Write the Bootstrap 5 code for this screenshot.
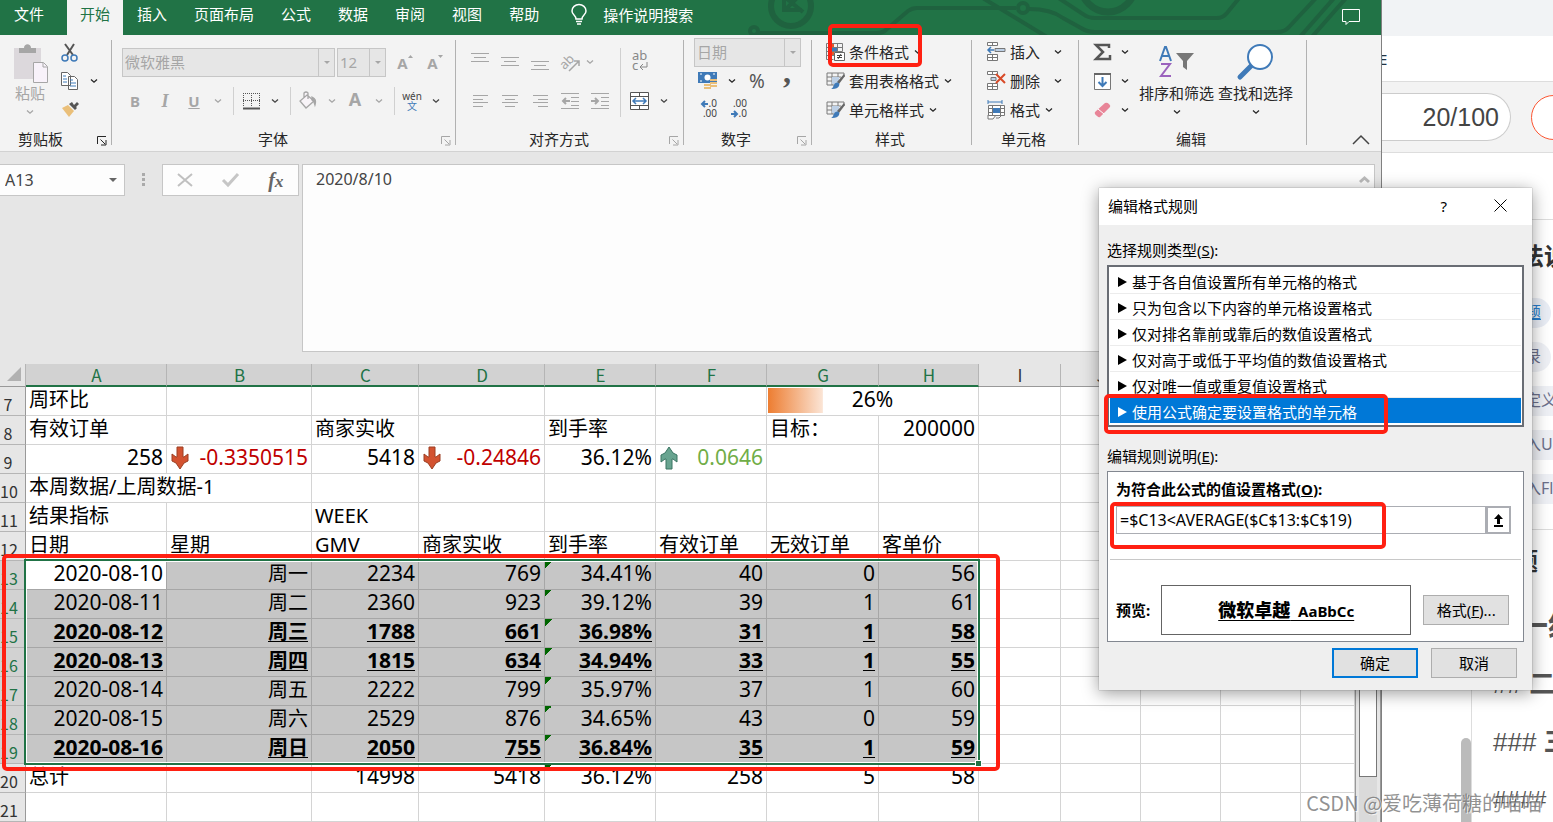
<!DOCTYPE html>
<html lang="zh-CN">
<head>
<meta charset="utf-8">
<meta name="viewport" content="width=device-width, initial-scale=1">
<title>编辑格式规则</title>
<link href="https://cdn.jsdelivr.net/npm/bootstrap@5.3.0/dist/css/bootstrap.min.css" rel="stylesheet">
<style>
:root{--xl:#217346;--gray:#a6a6a6;--ink:#262626;--mark:#ff2012}
body{font:15px/20px "Noto Sans","Noto Sans CJK SC",sans-serif;color:var(--ink);background:#fff;overflow:hidden}
button{font:inherit;color:inherit;background:none;border:0;padding:0}
svg{display:block;flex:none;overflow:visible}
.desktop{min-height:100vh}
.xl-window{min-width:0;border-right:1px solid #808080;background:#e6e6e6}
/* tab strip */
.tabstrip{height:35px;background:var(--xl);overflow:hidden}
.tabstrip .circuit{right:0;top:0}
.tabstrip a{display:block;position:relative;height:35px;padding:0 13px;line-height:28px;color:#fff;text-decoration:none}
.tabstrip a.active{background:#f3f3f3;color:var(--xl)}
.tabstrip .file-tab{margin:0 10px 0 1px}
.tabs{gap:1px}
.tell-me{margin-left:19px;height:29px}
/* ribbon */
.ribbon{height:117px;background:#f3f3f3;border-bottom:1px solid #d2d2d2}
.rgroup{display:flex;flex-direction:column;position:relative;flex:none}
.rgroup::after{content:"";position:absolute;right:0;top:5px;bottom:6px;width:1px;background:#b1b1b1}
.rbody{height:93px}
.rlabel{display:flex;justify-content:center;position:relative;height:23px;line-height:22px}
.rlabel svg{position:absolute;right:4px;bottom:5px}
.g-clip{width:112px}.g-font{width:344px}.g-align{width:228px}.g-num{width:128px}.g-style{width:160px}.g-cell{width:107px}.g-edit{width:228px}
.g-clip .rlabel{padding-right:31px}.g-font .rlabel{padding-right:22px}.g-align .rlabel{padding-right:22px}.g-num .rlabel{padding-right:24px}.g-style .rlabel,.g-cell .rlabel,.g-edit .rlabel{padding-right:4px}
.off{color:var(--gray)}
.tool{width:30px;height:28px;display:flex;align-items:center;justify-content:center}
.split{display:flex;align-items:center;gap:9px;height:28px}
.split>svg:first-child{width:20px}
.vsep{width:1px;height:28px;background:#d0d0d0;margin:0 7px 0 10px}
.combo{display:flex;height:29px;border:1px solid #c6c6c6;background:#e6e6e6;color:#a6a6a6}
.combo input{min-width:0;flex:1;border:0;background:none;color:inherit;padding:0 2px 2px;font:inherit}
.combo span{width:16px;border-left:1px solid #c6c6c6;display:flex;align-items:center;justify-content:center}
.tri{width:0;height:0;border:3px solid transparent;border-top-color:currentColor;border-bottom:0}
.cmd{display:flex;align-items:center;height:29px;padding-bottom:2px;white-space:nowrap}
.cmd>svg:first-child{width:20px;margin-right:3px}
.cmd .chev{margin-left:4px}
.far .chev{margin-left:13px}
.bigbtn{display:flex;flex-direction:column;align-items:center;padding-top:9px}
.bigbtn .chev{margin-top:5px}
.callout{position:absolute;border:4px solid var(--mark);border-radius:5px;pointer-events:none}
.callout-cf{left:16px;top:-11px;width:94px;height:43px}
/* formula bar */
.fbar{height:212px;padding:12px 6px 12px 0;font-size:16px}
.fbox{background:#fdfdfd;border:1px solid #c6c6c6}
.namebox{width:125px;height:32px;border-left:0;padding:0 7px 0 5px}
.namebox input{width:90px;border:0;background:none;padding:0;font:inherit;color:#444}
.fx{width:137px;height:32px;margin-right:3px}
.formula{min-width:0;padding:4px 5px 0 13px}
.formula textarea{border:0;resize:none;background:none;color:#444;padding:0;outline:0;overflow:hidden;line-height:20px}
/* sheet */
.sheetrow{min-width:0}
.sheet{min-width:0;background:#fff}
.grid{table-layout:fixed;width:100%;border-collapse:separate;border-spacing:0;font-size:20px;color:#000}
.grid th,.grid td{height:29px;padding:0 3px;line-height:26px;vertical-align:top;border:0 solid #d4d4d4;border-width:0 1px 1px 0;white-space:nowrap}
.grid th{font:400 17px/24px "Noto Sans CJK SC",sans-serif;background:#e6e6e6;color:#333;text-align:center;border-color:#b5b5b5}
.grid thead th{height:23px;line-height:21px;padding:0 2px 0 3px;border-bottom-color:#999}
.grid thead th.on{background:#d2d2d2;color:var(--xl);border-bottom:2px solid var(--xl)}
.grid tbody th{padding:7px 9px 0 0;line-height:21px;font-size:16px;border-right-color:#999}
.grid .n{font-size:21px;line-height:25px;text-align:right}
.grid .sel td{background-color:#c6c6c6;border-color:#a6a6a6}
.grid .sel th{background:#d2d2d2;color:var(--xl)}
.grid .sel td.cur{background:#fff}
.grid .sel td.out{background:#fff;border-color:#d4d4d4}
.grid .low td{font-weight:700;text-decoration:underline;text-decoration-thickness:1px;text-underline-offset:2px}
.grid .warn{background-image:linear-gradient(135deg,#060 50%,transparent 50%);background-size:7px 7px;background-repeat:no-repeat}
.grid .databar{background:linear-gradient(90deg,#ed7d31,#fbe5d6) 1px 1px/26% 25px no-repeat}
.corner{width:0;height:0;border-left:14px solid transparent;border-bottom:14px solid #b1b1b1;margin:3px 0 0 7px}
.selection{left:24px;top:195px;width:956px;height:206px;border:2px solid var(--xl);box-shadow:inset 0 0 0 1px #fff}
.handle{right:-4px;bottom:-4px;width:7px;height:7px;background:var(--xl);border:1px solid #fff}
.callout-sel{left:2px;top:190px;width:998px;height:217px}
.vscroll{width:26px;border-left:1px solid #999;border-right:1px solid #999;padding:0 3px;background:#e6e6e6}
.vscroll .track{background:#dadada;height:100%}
.vscroll .thumb{height:413px;background:#fff;border:1px solid #777}
/* browser page behind */
.page{width:171px;flex:none;overflow:hidden;background:#fff;white-space:nowrap}
.strip{height:36px;background:#f1f3f5}
.crumb{height:46px;border-bottom:1px solid #ddd;line-height:46px;font-size:15px;color:#234}
.titlebar{height:71px;background:#f3f3f3;border-bottom:1px solid #ddd}
.counter{width:129px;height:48px;border:1px solid #ccc;border-left:0;border-radius:0 24px 24px 0;background:#fff;font:25px/46px "Liberation Sans",sans-serif;padding-right:11px;color:#444}
.pillbtn{width:60px;height:45px;border:1px solid #fc5531;border-radius:23px;background:#fff;margin-left:20px;flex:none}
.gutter{width:90px;border-right:1px solid #ddd;margin-top:67px}
.gutter .thumb2{width:10px;height:84px;background:#bbb;border-radius:5px 5px 0 0}
.help{padding-left:24px;width:300px}
.help h2{font-size:24px;line-height:32px;font-weight:700;color:#333;margin:0;padding:20px 0 26px}
.help h2.sub{padding:15px 0 20px;margin-left:-6px}
.help .chip{display:block;width:max-content;height:30px;line-height:28px;padding:0 10px;margin:0 0 14px 3px;border-radius:15px;background:#eef0f5;color:#6b6f8a;font-size:16px;text-decoration:none}
.help .chip.link{color:#267dcc;text-decoration:underline;background:#e9edf5}
.help .md{font-family:"Liberation Sans","Noto Sans CJK SC",sans-serif;color:#555;line-height:58px;height:58px;margin-left:-3px;font-size:26px}
.help .md1{font-size:30px}
.help .md4{font-size:24px;height:42px}
/* dialog */
.dlg{position:absolute;right:21px;top:188px;width:433px;background:#efefef;color:#000;box-shadow:0 3px 16px rgba(0,0,0,.4),0 0 1px #888}
.dlg-title{height:37px;background:#fff;padding:0 25px 2px 9px}
.dlg-body{padding:15px 8px 12px 8px}
.rules{border:2px solid #696d74;background:#fff;padding:1px 1px;height:162px;margin:5px 0 19px;position:relative}
.rules button{display:flex;align-items:center;width:100%;height:26px;padding:2px 0 0 8px;border-bottom:1px solid #ececec;gap:5px}
.rules button.active{background:#0078d7;color:#fff;border-color:#fff}
.rules i{border-left:9px solid currentColor;border-top:5px solid transparent;border-bottom:5px solid transparent}
.callout-rule{left:-5px;top:127px;width:284px;height:40px}
.panel{border:1px solid #828790;background:#fff;padding:7px 12px 6px 8px;position:relative;margin-top:5px}
.formula-in{height:28px;margin-top:7px}
.formula-in input{border:1px solid #abadb3;flex:1;min-width:0;padding:0 3px;color:#000;font-size:16px}
.pick{width:25px;border:2px solid #abadb3;background:#fff;display:flex;align-items:center;justify-content:center}
.callout-formula{left:2px;top:30px;width:276px;height:47px}
.panel .rule{height:1px;background:#c8c8c8;margin:25px -10px 25px -6px}
.preview{width:250px;height:50px;border:1px solid #646464;font-weight:700;text-decoration:underline;text-underline-offset:3px;margin:0 12px 0 11px}
.preview b{font-size:18px}
.wbtn{width:86px;height:30px;background:#e1e1e1;border:1px solid #adadad}
.wbtn.default{border:2px solid #0078d7;margin-right:13px}
.watermark{right:11px;bottom:7px;font:20px/24px "Noto Sans CJK SC",sans-serif;color:rgba(110,110,110,.75);text-shadow:1px 1px 0 rgba(255,255,255,.7);pointer-events:none}
</style>
</head>
<body>
<svg width="0" height="0" class="position-absolute" aria-hidden="true">
<symbol id="chev" viewBox="0 0 10 8"><path d="M2 2.500 5 5.200 8 2.500" fill="none" stroke="currentColor" stroke-width="1.300"/></symbol>
<symbol id="launch" viewBox="0 0 11 10"><path d="M.5 8V.5H9M3.500 3.500 8 8M9 4v5H4" fill="none" stroke="currentColor"/></symbol>
<symbol id="brushgrid" viewBox="0 0 20 18"><path d="M1 1h17v4M1 1v12h7M1 5h14M1 9h9M6 1v12M12 1v6" fill="none" stroke="#7a7a7a"/><path d="M6 5h7v7H6z" fill="#bdd0e6"/><path d="m19 4-6 8-2-2 7-8z" fill="#666"/><path d="M11 10.500c2 0 3 1.500 2 3.500-1 2-4 3.500-8 3 3-1 2-6 6-6.500z" fill="#3f7ab8"/></symbol>
<symbol id="down" viewBox="0 0 20 24"><path d="M7 1h6v10h1l4-3v7l-4 2-4 6-4-6-4-2V8l4 3h1z" fill="#d35230" stroke="#9c3f22"/></symbol>
</svg>
<div class="desktop d-flex position-relative">
<main class="xl-window flex-grow-1 d-flex flex-column">
  <nav class="tabstrip d-flex position-relative" aria-label="功能区">
    <svg class="circuit position-absolute" width="642" height="35" fill="none" stroke="#1f623f" stroke-width="4"><circle cx="52" cy="6" r="20" stroke-width="6"/><path d="M45-6v16h18M46 10l16-16M42-6l22 18" stroke-width="4"/><circle cx="15" cy="31" r="4"/><path d="M19 33h119q6 0 10-4l21-18q4-3 9-3h99M290 9q22 0 34 9l18 10q6 4 14 4h182q8 0 12-5l28-30M242-3l66 40M318-3l26 17q5 4 12 4h122q6 0 10-5l13-16M596-3 560 38M608-3 572 38"/><circle cx="284" cy="8" r="5"/><circle cx="369" cy="-15" r="27" stroke-width="7"/></svg>
    <a class="file-tab" href="#">文件</a>
    <div class="tabs d-flex"><a class="active" href="#">开始</a><a href="#">插入</a><a href="#">页面布局</a><a href="#">公式</a><a href="#">数据</a><a href="#">审阅</a><a href="#">视图</a><a href="#">帮助</a></div>
    <button class="tell-me d-flex align-items-center text-white position-relative"><svg width="16" height="21" fill="none" stroke="#fff" stroke-width="1.500" class="me-3"><path d="M5 15c0-4-4-4-4-8a7 6.500 0 0 1 14 0c0 4-4 4-4 8zM5 17.500h6M6 20h4"/></svg>操作说明搜索</button>
    <button class="ms-auto me-3 pe-1 position-relative" aria-label="批注"><svg width="19" height="17" fill="none" stroke="#fff"><path d="M.5.500h17v12H7l-3 3v-3H.500z"/></svg></button>
  </nav>

  <section class="ribbon d-flex">
    <div class="rgroup g-clip"><div class="rbody d-flex">
      <button class="bigbtn off ps-2 pe-2 me-1 ms-1"><svg width="36" height="39"><path d="M2 4h27v31H2z" fill="#dcd8dc"/><path d="M7 4h5c0-5 7-5 7 0h5v5H7z" fill="#a6a6a6"/><path d="M21.500 18.500h10l4 4v16h-14z" fill="#f8f2fa" stroke="#a6a6a6"/><path d="M31 19v4h4" fill="none" stroke="#a6a6a6"/></svg><span>粘贴</span><svg class="chev" width="10" height="8"><use href="#chev"/></svg></button>
      <div class="pt-1">
        <button class="split" aria-label="剪切"><svg width="20" height="20"><path d="m5 1 8 11M14 1 7 12" stroke="#555" stroke-width="2"/><g fill="none" stroke="#3f7ab8" stroke-width="1.500"><circle cx="5" cy="15" r="3"/><circle cx="14" cy="15" r="3"/></g></svg></button>
        <button class="split" aria-label="复制"><svg width="20" height="20" fill="#fff" stroke="#666"><path d="M1.500 1.500h6l3 3v10h-9zM8.500 5.500h6l3 3v10h-9z"/><path d="M3 5h3M3 8h4M3 11h4M10 9h3M10 12h6M10 15h6" stroke="#3f7ab8"/></svg><svg width="10" height="8"><use href="#chev"/></svg></button>
        <button class="split" aria-label="格式刷"><svg width="20" height="18"><path d="M2 8 8 5l6 6-5 6z" fill="#eabf79"/><path d="m9 4 6 6 2-2-1-1 3-3-2-2-3 3-2-3z" fill="#555"/></svg></button>
      </div></div>
      <div class="rlabel">剪贴板<svg width="11" height="10"><use href="#launch"/></svg></div></div>

    <div class="rgroup g-font"><div class="rbody">
      <div class="d-flex align-items-center" style="padding:13px 0 0 10px">
        <div class="combo" style="width:213px"><input value="微软雅黑" aria-label="字体" disabled><span><b class="tri"></b></span></div>
        <div class="combo" style="width:49px;margin-left:2px"><input value="12" aria-label="字号" disabled><span><b class="tri"></b></span></div>
        <button class="tool off fw-bold ms-1" aria-label="增大字号">A<svg width="5" height="16"><path d="m0 3 2.500-3L5 3z" fill="currentColor"/></svg></button>
        <button class="tool off fw-bold" aria-label="减小字号">A<svg width="5" height="16"><path d="M0 0h5L2.500 3z" fill="currentColor"/></svg></button>
      </div>
      <div class="d-flex align-items-center off" style="padding:10px 0 0 8px">
        <button class="tool fw-bold">B</button><button class="tool fw-bold fst-italic me-1" style="font-family:'Liberation Serif',serif;font-size:18px">I</button>
        <button class="split" aria-label="下划线"><span class="fw-bold text-decoration-underline text-center" style="width:20px">U</span><svg width="10" height="8"><use href="#chev"/></svg></button><i class="vsep"></i>
        <button class="split" aria-label="边框" style="color:#444"><svg width="20" height="20" fill="none" stroke="#555"><path d="M2.500 2v14M10.500 2v14M18.500 2v14M2 2.500h17M2 9.500h17" stroke-dasharray="1 1"/><path d="M2 17.500h17" stroke-width="2"/></svg><svg width="10" height="8"><use href="#chev"/></svg></button><i class="vsep"></i>
        <button class="split me-2" aria-label="填充颜色"><svg width="20" height="20" fill="#f8f4f8" stroke="#a6a6a6" stroke-width="1.300"><path d="m9 4 7 6-8 7-6-7zM6 7V2q2-2 4 0v6"/><path d="M14 6q5 2 3 8-1-4-3-5z" fill="#a6a6a6"/></svg><svg width="10" height="8"><use href="#chev"/></svg></button>
        <button class="split" aria-label="字体颜色"><span class="fw-bold text-center pb-1" style="width:20px;font-size:18px">A</span><svg width="10" height="8"><use href="#chev"/></svg></button><i class="vsep"></i>
        <button class="split" aria-label="拼音" style="color:#444"><span class="text-center" style="width:20px;font-size:10px;line-height:10px">wén<br><span style="color:#3f7ab8">文</span></span><svg width="10" height="8"><use href="#chev"/></svg></button>
      </div></div>
      <div class="rlabel">字体<svg class="off" width="11" height="10"><use href="#launch"/></svg></div></div>

    <div class="rgroup g-align"><div class="rbody d-flex off" style="padding:13px 0 0 9px">
      <div>
        <div class="d-flex" style="margin-bottom:11px">
          <button class="tool" aria-label="顶端对齐"><svg width="18" height="20" stroke="currentColor"><path d="M0 1.500h18M3 5.500h12M0 9.500h18"/></svg></button>
          <button class="tool" aria-label="垂直居中"><svg width="18" height="20" stroke="currentColor"><path d="M0 5.500h18M3 9.500h12M0 13.500h18"/></svg></button>
          <button class="tool" aria-label="底端对齐"><svg width="18" height="20" stroke="currentColor"><path d="M0 9.500h18M3 13.500h12M0 17.500h18"/></svg></button>
          <button class="split" aria-label="方向" style="gap:4px;margin-left:6px"><svg width="20" height="20"><text x="0" y="14" font-size="13" fill="currentColor" transform="rotate(-45 7 12)">ab</text><path d="m8 19 10-10M13 9h5v5" fill="none" stroke="currentColor" stroke-width="1.500"/></svg><svg width="10" height="8"><use href="#chev"/></svg></button>
        </div>
        <div class="d-flex">
          <button class="tool" aria-label="左对齐"><svg width="15" height="12" stroke="currentColor"><path d="M0 .500h15M0 4.500h10M0 7.500h15M0 11.500h10"/></svg></button>
          <button class="tool" aria-label="居中"><svg width="16" height="12" stroke="currentColor"><path d="M0 .500h16M3 4.500h10M0 7.500h16M3 11.500h10"/></svg></button>
          <button class="tool" aria-label="右对齐"><svg width="15" height="12" stroke="currentColor"><path d="M0 .500h15M5 4.500h10M0 7.500h15M5 11.500h10"/></svg></button>
          <button class="tool" aria-label="减少缩进"><svg width="18" height="16" stroke="currentColor" fill="none"><path d="M0 .500h18M10 4.500h8M10 8.500h8M10 12.500h8M0 15.500h18"/><path d="M9 8H2m3-3L2 8l3 3" stroke-width="2"/></svg></button>
          <button class="tool" aria-label="增加缩进"><svg width="18" height="16" stroke="currentColor" fill="none"><path d="M0 .500h18M10 4.500h8M10 8.500h8M10 12.500h8M0 15.500h18"/><path d="M0 8h7M4 5l3 3-3 3" stroke-width="2"/></svg></button>
        </div>
      </div>
      <i class="vsep" style="height:69px;margin:0 9px 0 5px"></i>
      <div>
        <button class="split" style="margin-bottom:11px" aria-label="自动换行"><svg width="20" height="20" fill="none" stroke="#888"><text x="2" y="8" font-size="13" fill="#888" stroke="none">ab</text><text x="2" y="18" font-size="13" fill="#888" stroke="none">c</text><path d="M17 10v5h-7m3-3-3 3 3 3"/></svg></button>
        <button class="split" aria-label="合并后居中" style="color:#444"><svg width="20" height="20" fill="#fff" stroke="#555"><path d="M.500 1.500h18v17h-18zM.500 5.500h18M.500 14.500h18M9.500 1v4M9.500 15v4"/><path d="M3 10h13M6 7l-3 3 3 3M13 7l3 3-3 3" fill="none" stroke="#3f7ab8" stroke-width="1.500"/></svg><svg width="10" height="8"><use href="#chev"/></svg></button>
      </div></div>
      <div class="rlabel">对齐方式<svg class="off" width="11" height="10"><use href="#launch"/></svg></div></div>

    <div class="rgroup g-num"><div class="rbody" style="padding:3px 0 0 10px">
      <div class="combo" style="width:107px"><input value="日期" aria-label="数字格式" disabled><span><b class="tri"></b></span></div>
      <div class="d-flex" style="padding-left:4px">
        <button class="split" aria-label="会计格式"><svg width="20" height="18"><path d="M0 0h19v11H0z" fill="#3f7ab8"/><circle cx="9.500" cy="5.500" r="3" fill="#fff"/><path d="M2 2h2M15 2h2M2 9h2" stroke="#fff"/><path d="M12 7h7v2h-7zm0 3h7v2h-7zm0 3h7v2h-7zM6 12h7v2H6zm0 3h7v2H6z" fill="#eabf79"/></svg><svg width="10" height="8"><use href="#chev"/></svg></button>
        <button class="tool" style="font-size:19px;color:#555;margin-left:5px">%</button><button class="tool" style="font:bold 32px/10px 'Liberation Serif',serif;color:#555;padding-bottom:18px">,</button>
      </div>
      <div class="d-flex" style="font-size:11px;line-height:9px;color:#444">
        <button class="tool" aria-label="增加小数位数"><svg width="18" height="20"><text x="17" y="8" text-anchor="end" font-size="10" fill="#444">.0</text><text x="17" y="18" text-anchor="end" font-size="10" fill="#444">.00</text><path d="M8 5H2m3-3L2 5l3 3" fill="none" stroke="#3f7ab8" stroke-width="2"/></svg></button>
        <button class="tool" aria-label="减少小数位数"><svg width="18" height="20"><text x="17" y="8" text-anchor="end" font-size="10" fill="#444">.00</text><text x="17" y="18" text-anchor="end" font-size="10" fill="#444">.0</text><path d="M1 15h6m-3-3 3 3-3 3" fill="none" stroke="#3f7ab8" stroke-width="2"/></svg></button>
      </div></div>
      <div class="rlabel">数字<svg class="off" width="11" height="10"><use href="#launch"/></svg></div></div>

    <div class="rgroup g-style"><div class="rbody" style="padding:3px 0 0 14px">
      <button class="cmd"><svg width="20" height="18"><path d="M.500.500h16v8M.500.500v16h7M.500 4.500h16M.500 8.500h16M.500 12.500h8M5.500 0v16M11.500 0v9" fill="none" stroke="#7a7a7a"/><path d="M6 1h2v3H6zM6 9h2v3H6z" fill="#e05a2b"/><path d="M6 5h5v3H6z" fill="#3f7ab8"/><path d="M8.500 9.500h10v8h-10z" fill="#fff" stroke="#666"/><path d="M11 12.500h5M11 14.500h5M15 11l-3 5" stroke="#444"/></svg>条件格式<svg class="chev" width="10" height="8"><use href="#chev"/></svg></button>
      <button class="cmd"><svg width="20" height="18"><use href="#brushgrid"/></svg>套用表格格式<svg class="chev" width="10" height="8"><use href="#chev"/></svg></button>
      <button class="cmd"><svg width="20" height="18"><use href="#brushgrid"/></svg>单元格样式<svg class="chev" width="10" height="8"><use href="#chev"/></svg></button></div>
      <div class="rlabel">样式</div><span class="callout callout-cf"></span></div>

    <div class="rgroup g-cell"><div class="rbody" style="padding:3px 0 0 15px">
      <button class="cmd far"><svg width="20" height="19" fill="#fff" stroke="#777"><path d="M.500.500h10v3H.500zM5.500 0v3M.500 12.500h10v6H.500zM5.500 12v6M.500 15.500h10"/><path d="M8 6.500h10v3H8z" fill="#bdd0e6"/><path d="M7 8H1m3-3L1 8l3 3" fill="none" stroke="#3f7ab8" stroke-width="1.500"/></svg>插入<svg class="chev" width="10" height="8"><use href="#chev"/></svg></button>
      <button class="cmd far"><svg width="20" height="19" fill="#fff" stroke="#777"><path d="M.500.500h10v3H.500zM5.500 0v3M.500 12.500h10v6H.500zM5.500 12v6M.500 15.500h10"/><path d="M4 6.500h5v3H4z" fill="#bdd0e6"/><path d="m9 3 9 9M18 3l-9 9" stroke="#d84a28" stroke-width="2"/></svg>删除<svg class="chev" width="10" height="8"><use href="#chev"/></svg></button>
      <button class="cmd"><svg width="20" height="20" fill="#fff" stroke="#777"><path d="M1 0v4M15 0v4M1 2h14" stroke="#3f7ab8"/><path d="M1.500 5.500h16v10h-16zM1.500 8.500h16M1.500 12.500h16M5.500 5v10M13.500 5v10M1 15v4h5l3-4M9 18h3l3-3"/><path d="M6 8h7v5H6z" fill="#3f7ab8" stroke="none"/></svg>格式<svg class="chev" width="10" height="8"><use href="#chev"/></svg></button></div>
      <div class="rlabel">单元格</div></div>

    <div class="rgroup g-edit"><div class="rbody d-flex">
      <div style="padding:3px 9px 0 14px">
        <button class="cmd" aria-label="求和"><svg width="20" height="18" fill="none" stroke="#555" stroke-width="2.500"><path d="M16 5V2H3l7 7-7 7h14v-4"/></svg><svg class="chev" width="10" height="8"><use href="#chev"/></svg></button>
        <button class="cmd" aria-label="填充"><svg width="20" height="18"><path d="M1.500 1.500h16v16h-16z" fill="#fff" stroke="#777"/><path d="M1 1h17v2H1z" fill="#666"/><path d="M9.500 5v9m-4-4 4 4 4-4" fill="none" stroke="#3f7ab8" stroke-width="2"/></svg><svg class="chev" width="10" height="8"><use href="#chev"/></svg></button>
        <button class="cmd" aria-label="清除"><svg width="20" height="18"><path d="m2 11 10-9q2-1 4 1 2 2 1 3L7 16q-1 1-3-1-3-2-2-4z" fill="#e88598"/><path d="m5 8 6 5" stroke="#fff"/></svg><svg class="chev" width="10" height="8"><use href="#chev"/></svg></button>
      </div>
      <button class="bigbtn me-1"><svg width="36" height="39"><path d="M1 17 6 3h1l5 14M3 12h7" fill="none" stroke="#3f7ab8" stroke-width="2"/><path d="M2 20h9L2 32h10" fill="none" stroke="#9b62bd" stroke-width="2"/><path d="M17 9h18l-7 8v9l-4-3v-6z" fill="#777"/></svg>排序和筛选<svg class="chev" width="10" height="8"><use href="#chev"/></svg></button>
      <button class="bigbtn"><svg width="36" height="39"><path d="M13 22 2 33" stroke="#3f7ab8" stroke-width="5" stroke-linecap="round"/><circle cx="22" cy="13" r="12" fill="#fff" stroke="#3f7ab8" stroke-width="2"/></svg>查找和选择<svg class="chev" width="10" height="8"><use href="#chev"/></svg></button></div>
      <div class="rlabel">编辑</div></div>
    <button class="ms-auto align-self-end" style="margin:0 11px 6px" aria-label="折叠功能区"><svg width="18" height="10" fill="none" stroke="#444" stroke-width="1.500"><path d="m1 9 8-8 8 8"/></svg></button>
  </section>

  <section class="fbar d-flex">
    <div class="fbox namebox d-flex align-items-center justify-content-between"><input value="A13" aria-label="名称框"><b class="tri" style="color:#666;border-width:4px 4px 0"></b></div>
    <svg width="37" height="32" fill="#aaa"><path d="M17 9h3v3h-3zM17 14h3v3h-3zM17 19h3v3h-3z"/></svg>
    <div class="fbox fx d-flex align-items-center justify-content-around">
      <button aria-label="取消输入"><svg width="16" height="14" stroke="#c0c0c0" stroke-width="2"><path d="m1 1 14 12M15 1 1 13"/></svg></button>
      <button aria-label="输入"><svg width="17" height="14" fill="none" stroke="#c6c6c6" stroke-width="3"><path d="m1 7 5 5L16 1"/></svg></button>
      <button class="fst-italic fw-bold" style="font-family:'Liberation Serif',serif;font-size:20px;color:#666" aria-label="插入函数">f<small>x</small></button>
    </div>
    <div class="fbox formula flex-grow-1 d-flex"><textarea class="flex-grow-1" aria-label="编辑栏">2020/8/10</textarea><svg width="9" height="20" fill="none" stroke="#bbb" stroke-width="3"><path d="m0 13 4.500-4L9 13"/></svg></div>
  </section>

  <section class="sheetrow d-flex flex-grow-1">
    <div class="sheet flex-grow-1 position-relative">
      <table class="grid">
        <colgroup><col style="width:26px"><col style="width:141px"><col style="width:145px"><col style="width:107px"><col style="width:126px"><col style="width:111px"><col style="width:111px"><col style="width:112px"><col style="width:100px"><col style="width:82px"><col style="width:80px"><col style="width:80px"><col style="width:80px"><col></colgroup>
        <thead><tr><th class="p-0"><div class="corner"></div></th><th class="on">A</th><th class="on">B</th><th class="on">C</th><th class="on">D</th><th class="on">E</th><th class="on">F</th><th class="on">G</th><th class="on">H</th><th>I</th><th>J</th><th>K</th><th>L</th><th></th></tr></thead>
        <tbody>
        <tr><th>7</th><td>周环比</td><td></td><td></td><td></td><td></td><td></td><td class="n databar text-center" colspan="2">26%</td><td></td><td></td><td></td><td></td><td></td></tr>
        <tr><th>8</th><td>有效订单</td><td></td><td>商家实收</td><td></td><td>到手率</td><td></td><td>目标：</td><td class="n">200000</td><td></td><td></td><td></td><td></td><td></td></tr>
        <tr><th>9</th><td class="n">258</td><td class="n" style="color:#c00000"><div class="d-flex justify-content-between"><svg width="20" height="26"><use href="#down"/></svg>-0.3350515</div></td><td class="n">5418</td><td class="n" style="color:#c00000"><div class="d-flex justify-content-between"><svg width="20" height="26"><use href="#down"/></svg>-0.24846</div></td><td class="n">36.12%</td><td class="n" style="color:#70ad47"><div class="d-flex justify-content-between"><svg width="20" height="26"><path d="M7 24h6V14h1l4 3v-7l-4-2-4-6-4 6-4 2v7l4-3h1z" fill="#68a490" stroke="#3a7563"/></svg>0.0646</div></td><td></td><td></td><td></td><td></td><td></td><td></td><td></td></tr>
        <tr><th>10</th><td colspan="2">本周数据/上周数据-1</td><td></td><td></td><td></td><td></td><td></td><td></td><td></td><td></td><td></td><td></td><td></td></tr>
        <tr><th>11</th><td>结果指标</td><td></td><td>WEEK</td><td></td><td></td><td></td><td></td><td></td><td></td><td></td><td></td><td></td><td></td></tr>
        <tr><th>12</th><td>日期</td><td>星期</td><td>GMV</td><td>商家实收</td><td>到手率</td><td>有效订单</td><td>无效订单</td><td>客单价</td><td></td><td></td><td></td><td></td><td></td></tr>
        </tbody>
        <tbody id="days"></tbody>
        <tbody>
        <tr><th>20</th><td>总计</td><td></td><td class="n">14998</td><td class="n">5418</td><td class="n warn">36.12%</td><td class="n">258</td><td class="n">5</td><td class="n">58</td><td></td><td></td><td></td><td></td><td></td></tr>
        <tr><th>21</th><td></td><td></td><td></td><td></td><td></td><td></td><td></td><td></td><td></td><td></td><td></td><td></td><td></td></tr>
        </tbody>
      </table>
      <div class="selection position-absolute"><span class="handle position-absolute"></span></div>
      <span class="callout callout-sel"></span>
    </div>
    <div class="vscroll flex-shrink-0"><div class="track"><div class="thumb"></div></div></div>
  </section>
</main>

<aside class="page d-flex flex-column">
  <div class="strip"></div>
  <div class="crumb"><span style="margin-left:-3px">E</span></div>
  <div class="titlebar d-flex align-items-center"><div class="counter text-end flex-shrink-0">20/100</div><button class="pillbtn" aria-label="保存"></button></div>
  <div class="d-flex flex-grow-1">
    <div class="gutter flex-shrink-0 d-flex align-items-end justify-content-end"><div class="thumb2"></div></div>
    <div class="help">
      <div style="height:67px;margin-left:-24px;border-bottom:1px solid #ddd"></div>
      <h2>语法说明</h2>
      <a class="chip link" href="#">标题</a><a class="chip" href="#">目录</a><a class="chip" href="#">自定义列表</a><a class="chip" href="#">插入URL</a><a class="chip" href="#">插入Flowchart</a>
      <div style="height:12px;margin-left:-24px;border-bottom:1px solid #ddd"></div>
      <h2 class="sub">标题</h2>
      <div class="md md1"># <b>一级标题</b></div><div class="md">## <b>二级标题</b></div><div class="md">### <b>三级标题</b></div><div class="md md4">#### <b>四级标题</b></div>
    </div>
  </div>
</aside>

<form class="dlg" role="dialog" aria-label="编辑格式规则" onsubmit="return false">
  <div class="dlg-title d-flex align-items-center"><span class="me-auto">编辑格式规则</span><button type="button" style="margin-right:47px">?</button><button type="button" aria-label="关闭"><svg width="13" height="13" stroke="#000"><path d="m.500.500 12 12M12.500.500l-12 12"/></svg></button></div>
  <div class="dlg-body">
    <div>选择规则类型(<u>S</u>):</div>
    <div class="rules">
      <button type="button"><i></i>基于各自值设置所有单元格的格式</button><button type="button"><i></i>只为包含以下内容的单元格设置格式</button><button type="button"><i></i>仅对排名靠前或靠后的数值设置格式</button><button type="button"><i></i>仅对高于或低于平均值的数值设置格式</button><button type="button"><i></i>仅对唯一值或重复值设置格式</button><button type="button" class="active"><i></i>使用公式确定要设置格式的单元格</button>
      <span class="callout callout-rule"></span>
    </div>
    <div>编辑规则说明(<u>E</u>):</div>
    <div class="panel">
      <label class="fw-bold d-block" for="rule-formula">为符合此公式的值设置格式(<u>O</u>):</label>
      <div class="formula-in d-flex"><input id="rule-formula" type="text" value="=$C13&lt;AVERAGE($C$13:$C$19)"><button type="button" class="pick" aria-label="选择区域"><svg width="11" height="13"><path d="M5.500 0 10 5H7v5H4V5H1zM1 11h9v2H1z"/></svg></button></div>
      <div class="rule"></div>
      <div class="d-flex align-items-center"><b>预览:</b><div class="preview d-flex align-items-center justify-content-center"><span><b>微软卓越</b>&nbsp; AaBbCc</span></div><button type="button" class="wbtn">格式(<u>F</u>)...</button></div>
      <span class="callout callout-formula"></span>
    </div>
    <div class="d-flex justify-content-end" style="padding:6px 7px 0 0"><button type="submit" class="wbtn default">确定</button><button type="button" class="wbtn">取消</button></div>
  </div>
</form>
<div class="watermark position-absolute">CSDN @爱吃薄荷糖的喵喵</div>
</div>
<script>
const days = [
  ['2020-08-10','周一',2234,769,'34.41%',40,0,56],
  ['2020-08-11','周二',2360,923,'39.12%',39,1,61],
  ['2020-08-12','周三',1788,661,'36.98%',31,1,58],
  ['2020-08-13','周四',1815,634,'34.94%',33,1,55],
  ['2020-08-14','周五',2222,799,'35.97%',37,1,60],
  ['2020-08-15','周六',2529,876,'34.65%',43,0,59],
  ['2020-08-16','周日',2050,755,'36.84%',35,1,59]];
// rows whose GMV is below the weekly average are bold and underlined
const avg = days.reduce((s, d) => s + d[2], 0) / days.length;
document.getElementById('days').innerHTML = days.map((d, r) =>
  `<tr class="sel ${d[2] < avg ? 'low' : ''}"><th>${13 + r}</th>` +
  d.map((v, c) => `<td class="${c === 1 ? 'text-end' : 'n'}${c === 4 ? ' warn' : ''}${r + c === 0 ? ' cur' : ''}">${v}</td>`).join('') +
  '<td class="out"></td>'.repeat(5) + '</tr>').join('');
</script>
<script src="https://cdn.jsdelivr.net/npm/bootstrap@5.3.0/dist/js/bootstrap.bundle.min.js"></script>
</body>
</html>
